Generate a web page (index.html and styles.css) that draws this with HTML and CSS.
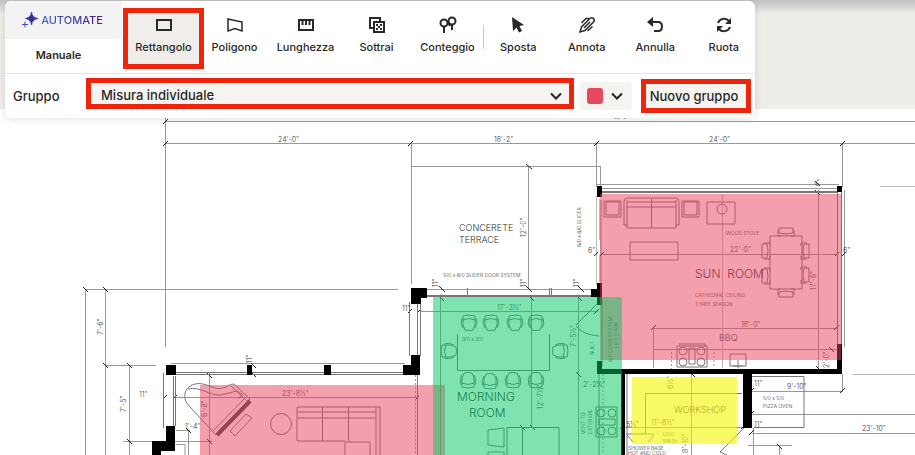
FILE: index.html
```html
<!DOCTYPE html>
<html lang="it">
<head>
<meta charset="utf-8">
<meta name="viewport" content="width=device-width, initial-scale=1">
<title>Misurazione planimetria</title>
<link rel="stylesheet" href="styles.css">
</head>
<body>
<main class="workspace">
  <svg class="plan" viewBox="0 0 915 455" preserveAspectRatio="xMinYMin slice" role="img" aria-label="Planimetria">
    <defs>
      <g id="chair"><path d="M2 1Q8-1 14 1V5Q15 10 12 15Q8 16 4 15Q1 10 2 5Z"/><path d="M1 3Q-1 9 2 13M15 3Q17 9 14 13M2 5Q8 2 14 5"/></g>
      <g id="side-chair"><path d="M1 0H15V5Q8 7 1 5ZM0 2V8H3M16 2V8H13"/></g>
      <g id="stove"><path d="M0 0H30V21H0ZM12 2H18V18H12Z"/><circle cx="6" cy="5" r="4"/><circle cx="24" cy="5" r="4"/><circle cx="6" cy="16" r="4"/><circle cx="24" cy="16" r="4"/></g>
    </defs>

    <g class="dimension">
      <path d="M165 121.500H915M165 143.500H915M165.500 118V347M85 289.500H398M85.500 289V455M105.500 289V455M105 365.500H156M129.500 365V455M123 441.500H212"/>
      <path d="M411.500 143V284M596.500 143V187M411 166.500H600M600.500 166V186M528.500 166V289M842.500 143V187"/>
      <path d="M411 289.500H592M171 363.500H405M209.500 373V455M176 397.500H418M420 311.500H598M440.500 297V455M531.500 297V427M578.500 297V455"/>
      <path d="M600 254.500H838M596 184.500H839M597 188.500H838M844.500 190V347M653 328.500H837M653 349.500H837M653.500 328V368M818.500 190V370"/>
      <path d="M842.500 374V392M752 391.500H843M752 414.500H915M752 433.500H915M753.500 428V455M748 445.500H792M779.500 445V455M622 427.500H752"/>
      <path d="M176 430.500H190M188.500 430V455M176 444.500H185V455M691.500 374V455"/>
    </g>
    <path class="faint" d="M880 186.500H915M852 374.500H915M722.500 194V368M596.500 254V285M599.500 255V286M596.500 196V253M599.500 199V240"/>
    <g class="tick">
      <path d="M163 124l5-5M163 146l5-5M408 146l5-5M594 146l5-5M840 146l5-5M526 164l6 5M83 287l5 5M103 287l5 5M103 363l5 5M127 363l5 5M127 439l5 5M207 373l5 5M207 439l5 5M173 399l4-4M163 399l4-4M415 400l4-4M594 256l4-4M600 256l4-4M835 256l4-4M842 256l4-4M651 330l5-5M834 330l5-5M439 286l6 6M526 286l6 6M578 286l6 6M439 296l5 5M529 296l5 5M577 296l5 5M576 372l5 5M417 313l4-4M408 313l4-4M594 314l5-5M815 181l5 5M815 190l5 5M816 366l5 5M829 347l5 5M749 393l5-5M840 393l5-5M749 416l5-5M749 435l5-5M777 444l5 5M690 372l5 5M620 429l5-5M741 429l5-5M251 363l5 5M251 372l5 5M520 425l5 5M530 425l5 5M186 428l5 5"/>
    </g>

    <g class="wall-line">
      <path d="M171 372.500H405M171 374.500H405M163.500 373V428M173.500 376V426M175.500 376V426M409.500 302V356M417.500 304V356M420.500 304V356M417.500 375V455"/>
      <path d="M427 295.500H592M427 296.500H592M467.500 288V296M549.500 288V296M551.500 288V296M601 191.500H837M601 192.500H837M837.500 191V345M841.500 191V345M601 200V283M602 300V366M627 373V455"/>
      <path d="M748 376.500H804V427.500H754M645.500 433V393.500H742M576 325L597 304M576 326Q583 335 599 336M720 452L744 428M720 452L727 455"/>
    </g>
    <path class="dashed" d="M415.500 375V455M671.500 352V369M714 352V368M603 374V453"/>
    <path class="wall" d="M166 365h10v10h-10zM247 365h5v10h-5zM324 365h7v10h-7zM403 365h8v-10h9v20h-17zM411 288h16v10h-6v6h-10zM166 426h9v25h-14v4h-9v-14h14zM597 186h5v11h-5zM837 186h5v6h-5zM591 289h6v-6h5v22h-5v-8h-6zM597 361h5v8h235v-25h5v30h-90v54h-9v-54H625v81h-4v-81h-24z"/>

    <g class="furniture">
      <path d="M604 201h17v16h-17zM606 202h13v13h-13zM682 201h17v16h-17zM684 202h13v13h-13z"/>
      <path d="M627 198H676Q679 198 679 202V225H676V228H627V225H624V202Q624 198 627 198ZM627 200V226M676 200V226M627 202H676M627 207H676M651.500 199V228M630 242H678V260H630Z"/>
      <path d="M707 202h28v22h-28z"/><circle cx="722" cy="209" r="5"/>
      <path d="M770 236h32v53h-32z"/>
      <use href="#side-chair" transform="translate(778 228)"/><use href="#side-chair" transform="translate(794 297) rotate(180)"/>
      <use href="#side-chair" transform="translate(762 259) rotate(-90)"/><use href="#side-chair" transform="translate(762 284) rotate(-90)"/>
      <use href="#side-chair" transform="translate(809 243) rotate(90)"/><use href="#side-chair" transform="translate(809 267) rotate(90)"/>
      <use href="#stove" transform="translate(677 346)"/><path d="M679 344H705V347M730 354H746V366H730ZM738 360V368M733 366H743"/>
      <use href="#chair" transform="translate(461 315)"/><use href="#chair" transform="translate(483 315)"/><use href="#chair" transform="translate(507 315)"/><use href="#chair" transform="translate(528 315)"/>
      <use href="#chair" transform="translate(476 388) rotate(180)"/><use href="#chair" transform="translate(498 389) rotate(180)"/><use href="#chair" transform="translate(521 388) rotate(180)"/><use href="#chair" transform="translate(544 388) rotate(180)"/>
      <use href="#chair" transform="translate(441 359) rotate(-90)"/><use href="#chair" transform="translate(568 343) rotate(90)"/>
      <path d="M457.500 334V370.500H549.500V334M488 430L504 428V447L488 445ZM488 455V452H504V455M507 455V427.500H559V455M522.500 428V455"/>
      <use href="#stove" transform="translate(617 407) rotate(90)"/>
      <path d="M599 374V455"/>
      <path d="M216 435L191 408C178 396 187 381 203 384C213 386 216 391 226 387C232 383 235 383 238 388L250 399L217 434ZM188 389C201 386 209 396 221 395L237 391L243 395M231 386L248 402M238 399L243 394M213 431L245 398M217 435L250 402"/>
      <path d="M230 431L246 414L252 418L235 436Z"/><circle cx="281" cy="424" r="10.500"/>
      <path d="M297 407H380V455M297 407V441H345M297 412H376M297 418H376M322.500 407V441M348.500 407V441M376 407V455M345 442H370V455M345 442V455"/>
      <path d="M626 434H654M627 435L633 442M648 442L654 435"/>
    </g>
    <path class="piano-lid" d="M217 435L250 401"/>

    <g class="note">
      <text x="278" y="142">24'-0"</text><text x="494" y="142">18'-2"</text><text x="709" y="142">24'-0"</text>
      <text x="730" y="252">22'-0"</text><text x="741" y="327">18'-0"</text><text x="497" y="310">17'-3½"</text>
      <text x="282" y="396">23'-8½"</text><text x="402" y="311">11"</text><text x="139" y="397">11"</text><text x="185" y="429">1'-4"</text>
      <text x="588" y="253">6"</text><text x="843" y="253">6"</text><text x="754" y="386">11"</text><text x="754" y="427">11"</text>
      <text x="787" y="389">9'-10"</text><text x="862" y="431">23'-10"</text><text x="651" y="425">11'-8½"</text><text x="626" y="427">5½"</text>
      <text x="583" y="387">2'-2½"</text>
      <text transform="translate(103 335) rotate(-90)">7'-6"</text><text transform="translate(126 412) rotate(-90)">7'-5"</text>
      <text transform="translate(526 237) rotate(-90)">12'-0"</text><text transform="translate(207 417) rotate(-90)">6'-8"</text>
      <text transform="translate(543 409) rotate(-90)">12'-7½"</text><text transform="translate(576 347) rotate(-90)">7'-5½"</text>
      <text transform="translate(816 290) rotate(-90)">17'-6"</text><text transform="translate(829 368) rotate(-90)">2'-0"</text>
      <text transform="translate(438 287) rotate(-90)">11"</text><text transform="translate(526 287) rotate(-90)">11"</text><text transform="translate(579 287) rotate(-90)">11"</text>
      <text transform="translate(252 363) rotate(-90)">11"</text><text transform="translate(817 187) rotate(-45)">6"</text>
      <text transform="translate(688 453) rotate(-90)">8'-10"</text><text transform="translate(673 389) rotate(-90)">6½"</text>
    </g>
    <g class="caption">
      <text x="442" y="277">'6/0 x 8/0 SLIDER DOOR SYSTEM</text><text x="726" y="235">WOOD STOVE</text>
      <text x="695" y="297">CATHEDRAL CEILING</text><text x="695" y="306">THREE SEASON</text><text x="462" y="341">3/0 x 3/0</text>
      <text x="763" y="400">5/0 x 5/0</text><text x="763" y="408">PIZZA OVEN</text>
      <text x="628" y="450">SHOWER BASE</text><text x="663" y="436">DOG</text><text x="663" y="443">WASH</text>
      <text x="628" y="455">HOT AND COLD</text>
      <text x="614" y="119">66'-2"</text>
      <text transform="translate(581 247) rotate(-90)">8/0 x 8/0 SLIDER</text>
      <text transform="translate(612 362) rotate(-90)">8/0 DOOR SYSTEM</text><text transform="translate(618 348) rotate(-90)">LIFT DOOR</text>
      <text transform="translate(594 355) rotate(-90)">BUILT</text><text transform="translate(585 434) rotate(-90)">VENT TO</text><text transform="translate(592 434) rotate(-90)">EXTERIOR</text>
    </g>
    <g class="room">
      <text x="459" y="231">CONCERETE</text><text x="459" y="243">TERRACE</text><text x="719" y="341">BBQ</text><text x="674" y="413">WORKSHOP</text>
    </g>
    <g class="room room-large">
      <text x="695" y="278">SUN&#160; ROOM</text><text x="457" y="401">MORNING</text><text x="469" y="417">ROOM</text>
    </g>

    <path class="area area-red" d="M600 194H841V360H600ZM200 385H445V455H200Z"/>
    <path class="area area-green" d="M433 297H622V455H433Z"/>
    <path class="area area-yellow" d="M632 377H737V444H632Z"/>
  </svg>

  <div class="backdrop"></div>

  <section class="toolbar" aria-label="Strumenti">
    <div class="toolbar-top">
      <div class="modes">
        <button class="mode mode-auto" type="button">
          <svg class="sparkle" viewBox="0 0 16 16" aria-hidden="true"><path d="M9.500 0Q10 5.500 16 6.500Q10 7.500 9.500 13Q9 7.500 3.500 6.500Q9 5.500 9.500 0Z"/><path d="M3 9.500V15.500M0 12.500H6"/></svg>
          <span>AUTOMATE</span>
        </button>
        <button class="mode" type="button">Manuale</button>
      </div>
      <div class="tools tools-measure">
        <button class="tool tool-active" type="button"><svg viewBox="0 0 18 18" aria-hidden="true"><path d="M2 4H16V14H2Z"/></svg>Rettangolo</button>
        <button class="tool" type="button"><svg class="fine" viewBox="0 0 18 18" aria-hidden="true"><path d="M2 3L16 6V15L9 12.500L2 15Z"/></svg>Poligono</button>
        <button class="tool" type="button"><svg viewBox="0 0 18 18" aria-hidden="true"><path d="M2 4H16V14H2ZM5.500 4V9M9 4V9M12.500 4V9"/></svg>Lunghezza</button>
        <button class="tool" type="button"><svg viewBox="0 0 18 18" aria-hidden="true"><path d="M5 12H2V2H12V5M6 6H16V16H6Z"/><path class="dots" d="M8 8h2v2h-2zM12 8h2v2h-2zM10 10h2v2h-2zM8 12h2v2h-2zM12 12h2v2h-2z"/></svg>Sottrai</button>
        <button class="tool" type="button"><svg viewBox="0 0 18 18" aria-hidden="true"><circle cx="5" cy="7" r="3.500"/><circle cx="13" cy="5" r="3.500"/><path d="M5 10V17M13 9V14M9 6L11 10"/></svg>Conteggio</button>
      </div>
      <div class="tools tools-edit">
        <button class="tool" type="button"><svg viewBox="0 0 18 18" aria-hidden="true"><path class="solid" d="M3 1L15 9L10.500 10L13 15L10 16.500L7.500 11.500L4 15Z"/></svg>Sposta</button>
        <button class="tool" type="button"><svg class="fine" viewBox="0 0 18 18" aria-hidden="true"><path d="M2 16L3.500 11L12 2.500Q14 1 15.500 2.500Q17 4 15.500 6L7 14.500ZM3.500 7L8 2.500H11M6 12L12 6M9.500 15L14.500 10.500"/></svg>Annota</button>
        <button class="tool" type="button"><svg viewBox="0 0 18 18" aria-hidden="true"><path d="M4 6H12Q16 6 16 10.500Q16 15 12 15H8"/><path class="solid" d="M1 6L7 1V11Z"/></svg>Annulla</button>
        <button class="tool" type="button"><svg viewBox="0 0 18 18" aria-hidden="true"><path d="M3 7A6.500 6.500 0 0 1 14 5M15 11A6.500 6.500 0 0 1 4 13"/><path class="solid" d="M16 2V8H10ZM2 16V10H8Z"/></svg>Ruota</button>
      </div>
    </div>
    <div class="toolbar-group">
      <label class="group-label" for="group">Gruppo</label>
      <div class="select-box">
        <select id="group"><option>Misura individuale</option></select>
        <svg class="chevron" viewBox="0 0 12 8" aria-hidden="true"><path d="M1 1.500L6 6.500L11 1.500"/></svg>
      </div>
      <button class="color" type="button" aria-label="Colore"><span class="swatch"></span><svg class="chevron" viewBox="0 0 12 8" aria-hidden="true"><path d="M1 1.500L6 6.500L11 1.500"/></svg></button>
      <button class="new-group" type="button">Nuovo gruppo</button>
    </div>
  </section>
</main>
</body>
</html>
```
FILE: styles.css
```css
* { box-sizing: border-box; }

body {
  margin: 0;
  background: #fff;
  color: #292929;
  font-family: Inter, "Open Sans", sans-serif;
}

button, select {
  margin: 0;
  padding: 0;
  border: 0;
  background: none;
  color: inherit;
  font: inherit;
}

.workspace {
  position: relative;
  min-height: 100vh;
  overflow: hidden;
  padding: 1px 160px 0 5px;
}

.plan, .backdrop {
  position: absolute;
  top: 0;
  left: 0;
  width: 100%;
}

.plan { height: 100%; }

.backdrop {
  height: 109px;
  background: linear-gradient(#c2c0c1, #eeede9 14px);
}

.toolbar {
  position: relative;
  border-radius: 6px;
  background: #fff;
  box-shadow: 0 1px 8px rgba(0, 0, 0, 0.12);
  overflow: hidden;
}

.toolbar-top {
  display: flex;
  height: 73px;
  border-bottom: 1px solid #e4e4e4;
}

.modes {
  display: grid;
  grid-template-rows: 38px 32px;
  width: 117px;
}

.mode {
  display: flex;
  align-items: center;
  justify-content: center;
  padding-right: 10px;
  font-size: 11px;
  font-weight: 600;
}

.mode-auto {
  gap: 3px;
  padding-right: 2px;
  background: #f3f3f4;
}

.mode-auto span {
  background: linear-gradient(90deg, #3568c8, #4a1d82);
  background-clip: text;
  color: transparent;
  font-weight: 500;
}

.sparkle {
  width: 16px;
  height: 16px;
  fill: #3e2b94;
  stroke: #3b50b5;
}

.tools {
  display: grid;
  padding: 12px 0 9px;
}

.tools-measure {
  flex: 355;
  grid-template-columns: repeat(5, 1fr);
  margin-left: 6px;
}

.tools-edit {
  position: relative;
  flex: 268;
  grid-template-columns: repeat(4, 1fr);
  gap: 6px;
  padding-left: 4px;
}

.tools-edit::before {
  content: "";
  position: absolute;
  top: 24px;
  left: 0;
  width: 1px;
  height: 24px;
  background: #c8c8c8;
}

.tool {
  display: flex;
  flex-direction: column;
  align-items: center;
  gap: 5px;
  padding-top: 3px;
  font-size: 11px;
  line-height: 16px;
  font-weight: 500;
}

.tool svg {
  width: 18px;
  height: 18px;
  fill: none;
  stroke: currentColor;
  stroke-width: 2;
}

.tool .fine { stroke-width: 1.5; }

.tool .solid, .tool .dots {
  fill: currentColor;
  stroke: none;
}

.tool-active {
  background: #efeeea;
  outline: 5px solid #ee250c;
}

.toolbar-group {
  display: flex;
  align-items: center;
  height: 44px;
  padding: 0 4px 0 8px;
  font-size: 13px;
  font-weight: 500;
}

.group-label { width: 73px; }

.select-box {
  position: relative;
  flex: 1;
  height: 31px;
  margin: 0 6px 5px 0;
  border: 5px solid #ee250c;
  background: #f6f4f1;
}

.select-box select {
  width: 100%;
  height: 100%;
  padding: 3px 30px 0 10px;
  appearance: none;
}

.select-box .chevron {
  position: absolute;
  top: 9px;
  right: 7px;
}

.chevron {
  width: 12px;
  height: 8px;
  fill: none;
  stroke: #222;
  stroke-width: 2;
  pointer-events: none;
}

.color {
  display: flex;
  align-items: center;
  gap: 8px;
  width: 52px;
  height: 28px;
  margin-right: 9px;
  padding-left: 7px;
  border-radius: 3px;
  background: #f6f4f1;
}

.swatch {
  width: 16px;
  height: 16px;
  border-radius: 3px;
  background: #e8485f;
}

.new-group {
  width: 110px;
  height: 34px;
  padding-right: 4px;
  border: 5px solid #ee250c;
  background: #f6f4f1;
  white-space: nowrap;
}

.dimension, .wall-line, .furniture, .tick, .faint, .dashed {
  fill: none;
  stroke-width: 1;
}

.dimension { stroke: #999; }
.wall-line { stroke: #777; }
.furniture { stroke: #777; }
.tick { stroke: #222; }
.faint { stroke: #bbb; }
.dashed { stroke: #999; stroke-dasharray: 2 2; }
.wall { fill: #000; }
.piano-lid { fill: none; stroke: #444; stroke-width: 4; }

.note, .caption, .room {
  font-family: Inter, sans-serif;
  font-weight: 300;
  fill: #333;
}

.note { font-size: 7px; }
.caption { font-size: 5px; fill: #333; }
.room { font-size: 9px; }
.room-large { font-size: 12px; }

.area-red { fill: #e8405c; opacity: 0.5; }
.area-green { fill: #00c862; opacity: 0.5; }
.area-yellow { fill: #f5f500; opacity: 0.6; }
```
